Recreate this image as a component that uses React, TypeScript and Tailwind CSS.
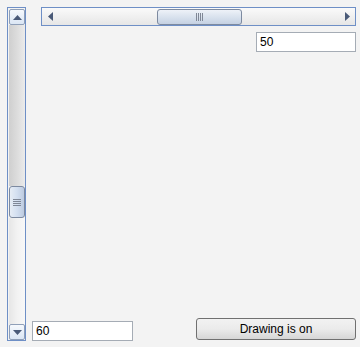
export default function App() {
  return (
    <div className="w-[360px] h-[347px] bg-[#f3f3f3] flex font-['Liberation_Sans',Arial,sans-serif] text-[12px] text-black overflow-hidden">
      {/* vertical scrollbar */}
      <div className="ml-[7px] mt-[7px] w-[19px] h-[334px] border border-[#6e8fc6] flex flex-col p-[1px] pr-0 pb-0">
        <div className="h-[16px] w-[16px] border border-[#8f9fb8] rounded-[2px] bg-gradient-to-b from-[#f6f9fd] to-[#dbe6f4] flex items-center justify-center">
          <svg width="9" height="5" viewBox="0 0 9 5">
            <path d="M4.5 0 L9 5 L0 5 Z" fill="#4a5a78" />
          </svg>
        </div>
        <div className="h-[161px] w-[16px] bg-gradient-to-r from-[#cfcfcf] via-[#dcdcdc] to-[#ebebeb]" />
        <div className="h-[32px] w-[16px] border border-[#7d8aa0] rounded-[3px] bg-gradient-to-r from-[#e7edf5] via-[#d3dff0] to-[#bdcbe0] flex items-center justify-center">
          <div className="flex flex-col gap-[1px]">
            <div className="w-[8px] h-[1px] bg-[#7f8796]" />
            <div className="w-[8px] h-[1px] bg-[#7f8796]" />
            <div className="w-[8px] h-[1px] bg-[#7f8796]" />
            <div className="w-[8px] h-[1px] bg-[#7f8796]" />
          </div>
        </div>
        <div className="flex-1 w-[16px] bg-gradient-to-r from-[#e6e6e6] via-[#f2f2f2] to-[#f8f8f8]" />
        <div className="h-[16px] w-[16px] border border-[#8f9fb8] rounded-[2px] bg-gradient-to-b from-[#f6f9fd] to-[#dbe6f4] flex items-center justify-center">
          <svg width="9" height="5" viewBox="0 0 9 5">
            <path d="M0 0 L9 0 L4.5 5 Z" fill="#4a5a78" />
          </svg>
        </div>
      </div>

      {/* right area */}
      <div className="flex flex-col ml-[6px] w-[324px] h-full">
        {/* horizontal scrollbar */}
        <div className="ml-[9px] mt-[7px] w-[315px] h-[19px] border border-[#6e8fc6] bg-gradient-to-b from-[#fafafa] to-[#e6e6e6] flex items-center">
          <div className="w-[16px] flex justify-center">
            <svg width="5" height="9" viewBox="0 0 5 9">
              <path d="M0 4.5 L5 0 L5 9 Z" fill="#4a5a78" />
            </svg>
          </div>
          <div className="w-[99px]" />
          <div className="w-[85px] h-[16px] border border-[#7d8aa0] rounded-[3px] bg-gradient-to-b from-[#eef2f8] via-[#d9e2ee] to-[#c5d1e2] flex items-center justify-center">
            <div className="flex gap-[1px]">
              <div className="w-[1px] h-[8px] bg-[#7f8796]" />
              <div className="w-[1px] h-[8px] bg-[#7f8796]" />
              <div className="w-[1px] h-[8px] bg-[#7f8796]" />
              <div className="w-[1px] h-[8px] bg-[#7f8796]" />
            </div>
          </div>
          <div className="flex-1" />
          <div className="w-[16px] flex justify-center">
            <svg width="5" height="9" viewBox="0 0 5 9">
              <path d="M5 4.5 L0 0 L0 9 Z" fill="#4a5a78" />
            </svg>
          </div>
        </div>

        <div className="flex justify-end mt-[6px]">
          <div className="w-[100px] h-[20px] border border-[#a5acb5] bg-white flex items-center pl-[3px]">
            50
          </div>
        </div>

        <div className="flex-1" />

        {/* bottom row */}
        <div className="flex items-end justify-between mb-[6px]">
          <div className="w-[101px] h-[20px] border border-[#a5acb5] bg-white flex items-center pl-[3px]">
            60
          </div>
          <div className="w-[160px] h-[22px] border border-[#707070] rounded-[3px] bg-gradient-to-b from-[#f2f2f2] via-[#ebebeb] to-[#d6d6d6] flex items-center justify-center mb-[1px]">
            Drawing is on
          </div>
        </div>
      </div>
    </div>
  );
}
